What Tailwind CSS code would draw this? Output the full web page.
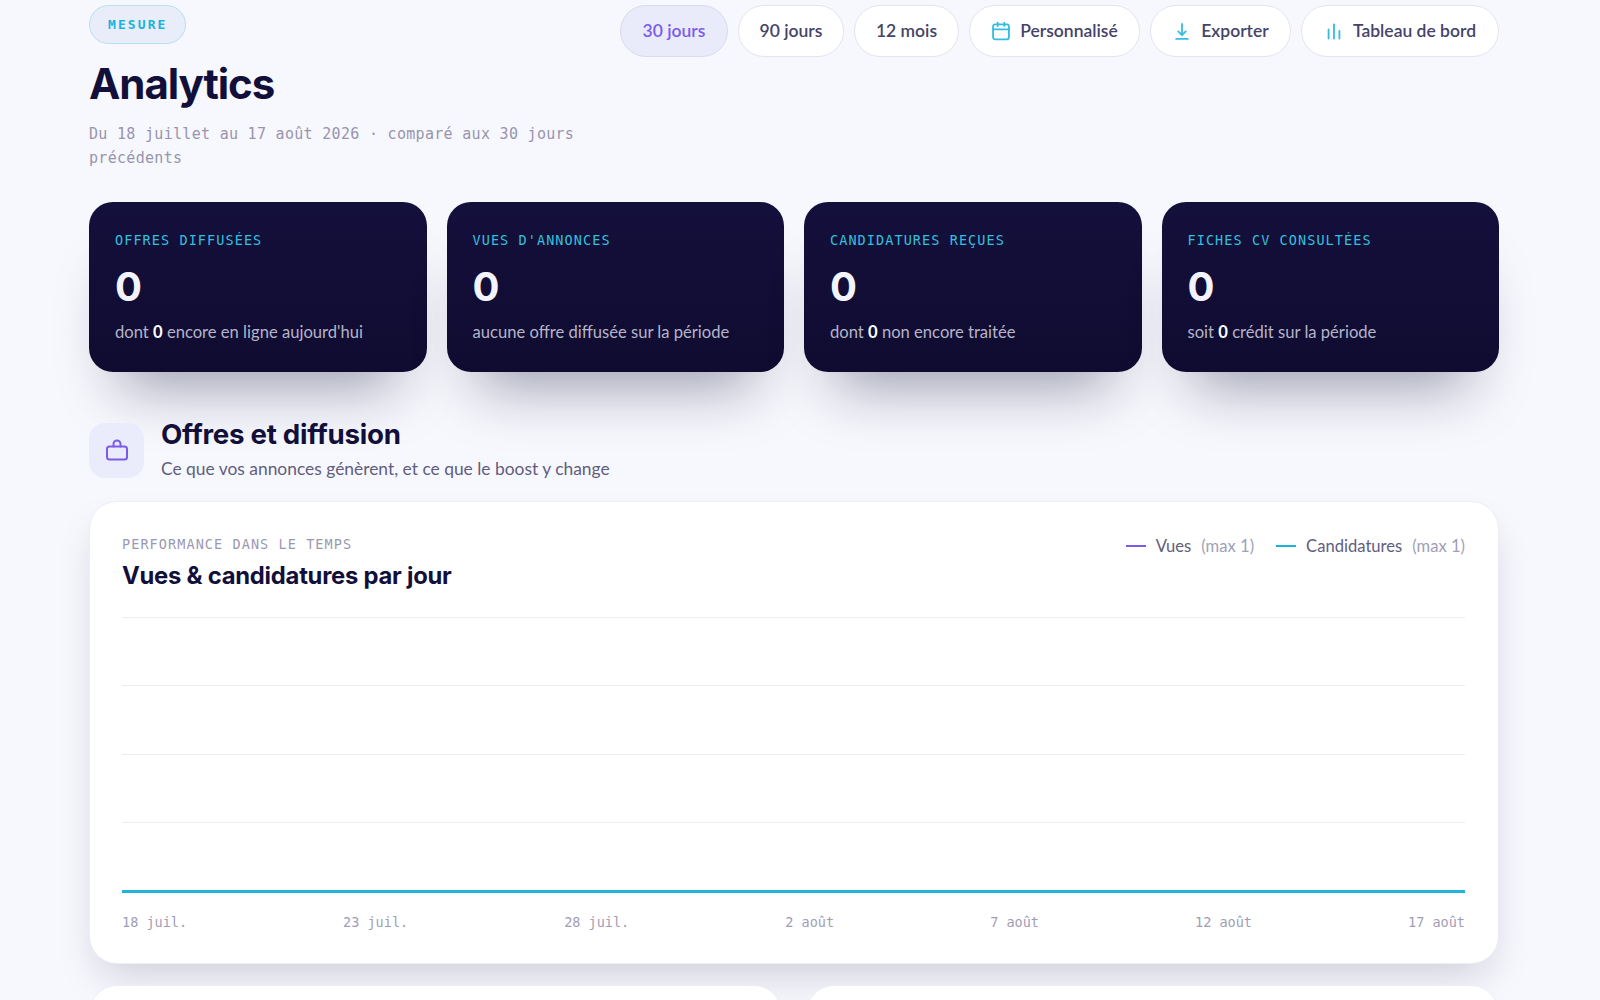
<!DOCTYPE html>
<html lang="fr">
<head>
    <meta charset="UTF-8">
    <meta name="viewport" content="width=device-width, initial-scale=1.0">
    <title>Analytics</title>
    <script src="https://cdn.jsdelivr.net/npm/@tailwindcss/browser@4"></script>
</head>
<body class="bg-[#f7f8fd] h-screen overflow-hidden font-['Lato',sans-serif] text-[#12103a]">
    <div class="pl-[89px] pr-[101px] pt-[5px]">

        <!-- en-tête -->
        <div class="flex justify-between items-start">
            <div>
                <span class="inline-flex items-center h-[39px] px-[18px] rounded-full border border-[#b5e0f0] bg-[#e9edfa] font-['DejaVu_Sans_Mono',monospace] font-bold text-[13px] tracking-[0.16em] text-[#18b4dc]">MESURE</span>
                <h1 class="mt-[12px] font-['Inter',sans-serif] font-bold text-[42px] leading-[56px] tracking-[-0.025em]">Analytics</h1>
                <p class="mt-[10px] w-[500px] font-['DejaVu_Sans_Mono',monospace] text-[15px] leading-[24px] tracking-[0.02em] text-[#9794ae]">Du 18 juillet au 17 août 2026 · comparé aux 30 jours précédents</p>
            </div>
            <div class="flex gap-[10px] text-[17.5px] font-semibold text-[#45436a]">
                <button class="h-[52px] w-[108px] rounded-full border border-[#d9dbec] bg-[#e9ebfb] text-[#7c5be8]">30 jours</button>
                <button class="h-[52px] w-[106px] rounded-full border border-[#e3e4ef] bg-white">90 jours</button>
                <button class="h-[52px] w-[105px] rounded-full border border-[#e3e4ef] bg-white">12 mois</button>
                <button class="h-[52px] w-[171px] rounded-full border border-[#e3e4ef] bg-white flex items-center justify-center gap-[9px]">
                    <svg class="w-[20px] h-[20px] text-[#36bce0]" viewBox="0 0 24 24" fill="none" stroke="currentColor" stroke-width="2.2" stroke-linecap="round" stroke-linejoin="round"><rect x="2.5" y="4" width="19" height="18" rx="2.5"/><path d="M16 2v4M8 2v4M2.5 10h19"/></svg>
                    Personnalisé
                </button>
                <button class="h-[52px] w-[141px] rounded-full border border-[#e3e4ef] bg-white flex items-center justify-center gap-[9px]">
                    <svg class="w-[20px] h-[20px] text-[#36bce0]" viewBox="0 0 24 24" fill="none" stroke="currentColor" stroke-width="2.2" stroke-linecap="round" stroke-linejoin="round"><path d="M12 3.5v13M7.5 12.5l4.5 4.5 4.5-4.5M5 21.5h14"/></svg>
                    Exporter
                </button>
                <button class="h-[52px] w-[198px] rounded-full border border-[#e3e4ef] bg-white flex items-center justify-center gap-[9px]">
                    <svg class="w-[20px] h-[20px] text-[#36bce0]" viewBox="0 0 24 24" fill="none" stroke="currentColor" stroke-width="2.2" stroke-linecap="round"><path d="M5.5 21V10M12 21V4M18.5 21v-9"/></svg>
                    Tableau de bord
                </button>
            </div>
        </div>

        <!-- KPI -->
        <div class="mt-[32px] grid grid-cols-4 gap-[20px]">
            <div class="h-[170px] rounded-[24px] px-[26px] pt-[30px] bg-gradient-to-b from-[#14103c] to-[#0f0b30] shadow-[0_44px_60px_-30px_rgba(18,16,58,0.4)]">
                <div class="font-['DejaVu_Sans_Mono',monospace] text-[13.5px] leading-[16px] tracking-[0.08em] text-[#33c0dc]">OFFRES DIFFUSÉES</div>
                <div class="mt-[15px] font-['Inter',sans-serif] font-bold text-[40px] leading-[48px] text-[#f3f4fb]">0</div>
                <div class="mt-[9px] text-[16.6px] leading-[24px] text-[#b5b4c9]">dont <b class="text-white">0</b> encore en ligne aujourd'hui</div>
            </div>
            <div class="h-[170px] rounded-[24px] px-[26px] pt-[30px] bg-gradient-to-b from-[#14103c] to-[#0f0b30] shadow-[0_44px_60px_-30px_rgba(18,16,58,0.4)]">
                <div class="font-['DejaVu_Sans_Mono',monospace] text-[13.5px] leading-[16px] tracking-[0.08em] text-[#33c0dc]">VUES D'ANNONCES</div>
                <div class="mt-[15px] font-['Inter',sans-serif] font-bold text-[40px] leading-[48px] text-[#f3f4fb]">0</div>
                <div class="mt-[9px] text-[16.6px] leading-[24px] text-[#b5b4c9]">aucune offre diffusée sur la période</div>
            </div>
            <div class="h-[170px] rounded-[24px] px-[26px] pt-[30px] bg-gradient-to-b from-[#14103c] to-[#0f0b30] shadow-[0_44px_60px_-30px_rgba(18,16,58,0.4)]">
                <div class="font-['DejaVu_Sans_Mono',monospace] text-[13.5px] leading-[16px] tracking-[0.08em] text-[#33c0dc]">CANDIDATURES REÇUES</div>
                <div class="mt-[15px] font-['Inter',sans-serif] font-bold text-[40px] leading-[48px] text-[#f3f4fb]">0</div>
                <div class="mt-[9px] text-[16.6px] leading-[24px] text-[#b5b4c9]">dont <b class="text-white">0</b> non encore traitée</div>
            </div>
            <div class="h-[170px] rounded-[24px] px-[26px] pt-[30px] bg-gradient-to-b from-[#14103c] to-[#0f0b30] shadow-[0_44px_60px_-30px_rgba(18,16,58,0.4)]">
                <div class="font-['DejaVu_Sans_Mono',monospace] text-[13.5px] leading-[16px] tracking-[0.08em] text-[#33c0dc]">FICHES CV CONSULTÉES</div>
                <div class="mt-[15px] font-['Inter',sans-serif] font-bold text-[40px] leading-[48px] text-[#f3f4fb]">0</div>
                <div class="mt-[9px] text-[16.6px] leading-[24px] text-[#b5b4c9]">soit <b class="text-white">0</b> crédit sur la période</div>
            </div>
        </div>

        <!-- section -->
        <div class="mt-[48px] flex items-center gap-[17px]">
            <div class="w-[55px] h-[55px] rounded-[16px] bg-[#eaecfc] flex items-center justify-center">
                <svg class="w-[24px] h-[24px] text-[#7c5be8]" viewBox="0 0 24 24" fill="none" stroke="currentColor" stroke-width="2" stroke-linecap="round" stroke-linejoin="round"><rect x="2" y="7.5" width="20" height="13" rx="2.5"/><path d="M8.5 7.5V5a3.5 3.5 0 0 1 7 0v2.5"/></svg>
            </div>
            <div>
                <h2 class="-mt-[3px] font-['Inter',sans-serif] font-bold text-[27.7px] leading-[34px] tracking-[-0.01em]">Offres et diffusion</h2>
                <p class="mt-[6px] text-[17.4px] leading-[24px] text-[#5f5d80]">Ce que vos annonces génèrent, et ce que le boost y change</p>
            </div>
        </div>

        <!-- graphique -->
        <div class="mt-[20px] h-[463px] rounded-[28px] border border-[#ecedf5] bg-white pl-[32px] pr-[33px] pt-[34px] shadow-[0_20px_40px_-10px_rgba(18,16,58,0.18)]">
            <div class="flex justify-between items-start">
                <div>
                    <div class="font-['DejaVu_Sans_Mono',monospace] text-[13.5px] leading-[16px] tracking-[0.08em] text-[#9a98b2]">PERFORMANCE DANS LE TEMPS</div>
                    <h3 class="mt-[8px] font-['Inter',sans-serif] font-bold text-[23.8px] leading-[32px] tracking-[-0.01em]">Vues &amp; candidatures par jour</h3>
                </div>
                <div class="-mt-[2px] flex items-center text-[16.6px] leading-[24px] text-[#5f5d80]">
                    <span class="w-[20px] h-[2px] bg-[#7c5be8] mr-[10px]"></span>Vues<span class="ml-[10px] text-[#a19fb8]">(max 1)</span>
                    <span class="ml-[22px] w-[20px] h-[2px] bg-[#18b4dc] mr-[10px]"></span>Candidatures<span class="ml-[10px] text-[#a19fb8]">(max 1)</span>
                </div>
            </div>
            <div class="mt-[25px] h-[276px] flex flex-col justify-between">
                <div class="h-px bg-[#ecedf3]"></div>
                <div class="h-px bg-[#ecedf3]"></div>
                <div class="h-px bg-[#ecedf3]"></div>
                <div class="h-px bg-[#ecedf3]"></div>
                <div class="h-[3px] bg-[#22b4d8]"></div>
            </div>
            <div class="mt-[19px] flex justify-between font-['DejaVu_Sans_Mono',monospace] text-[13.5px] leading-[20px] text-[#a09eb6]">
                <span>18 juil.</span><span>23 juil.</span><span>28 juil.</span><span>2 août</span><span>7 août</span><span>12 août</span><span>17 août</span>
            </div>
        </div>

        <!-- cartes suivantes, coupées par le bas de l'écran -->
        <div class="mt-[21px] grid grid-cols-2 gap-[24px]">
            <div class="h-[300px] rounded-[28px] border border-[#ecedf5] bg-white"></div>
            <div class="h-[300px] rounded-[28px] border border-[#ecedf5] bg-white"></div>
        </div>
    </div>
</body>
</html>
